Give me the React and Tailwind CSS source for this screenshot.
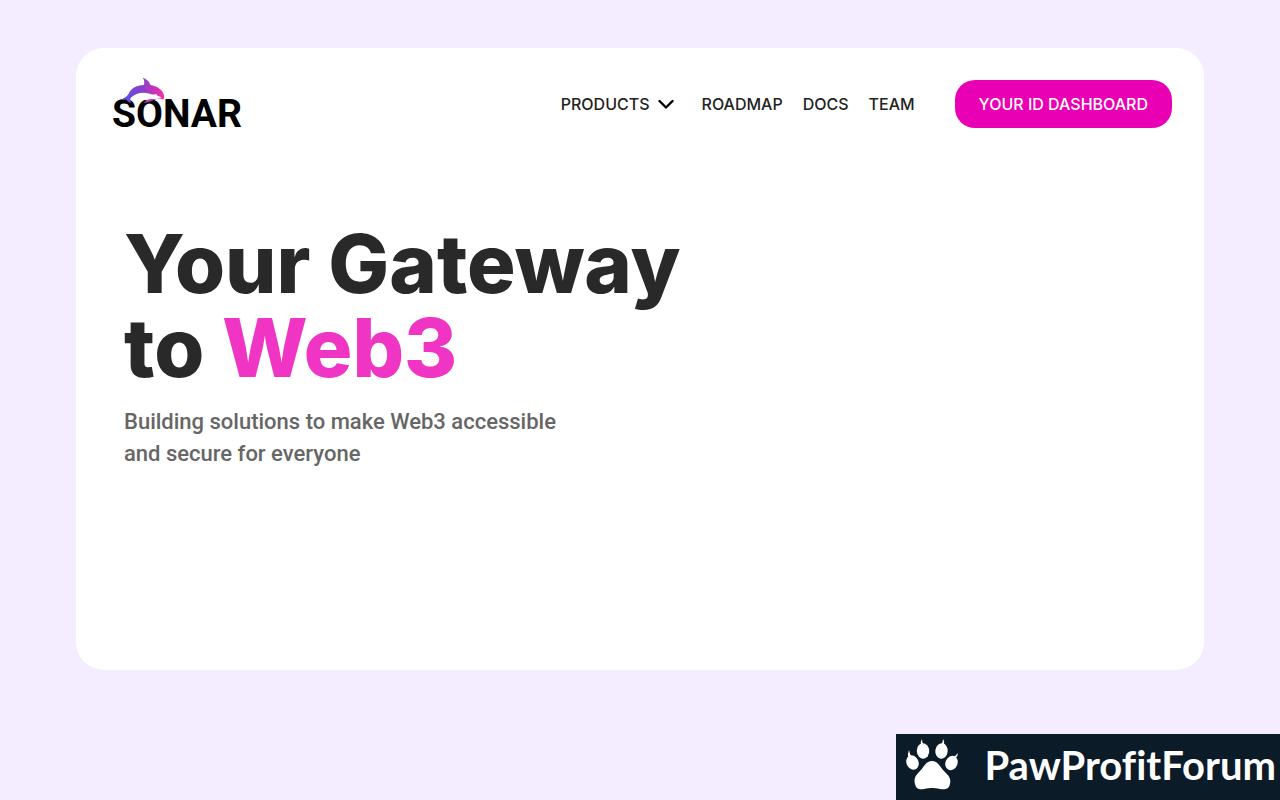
import React from 'react';

const links = ['Roadmap', 'Docs', 'Team'];

const Dolphin = () => (
  <svg className="absolute left-2.5 -top-5 h-7 w-11" viewBox="0 0 44 28" aria-hidden="true">
    <defs>
      <linearGradient id="dolphin" x1="0" y1="0" x2="1" y2="0">
        <stop offset="0" stopColor="#5a50e6" />
        <stop offset="0.5" stopColor="#8a3fca" />
        <stop offset="1" stopColor="#fb2ca6" />
      </linearGradient>
    </defs>
    <path d="M8 21C14 17 20 18 26 19L38 18L40 23L32 23C28 26 18 23 8 23Z" fill="#fff" />
    <path
      d="M6.500 18C9 12 14 9.500 22 9C22.500 6 22.500 4 20.500 1.500C25 3 27.500 6 28.500 9C35 10 40 13.500 41.500 18C42.500 20.500 42.500 22.500 41 23.500C39 22.500 36 22.500 34 22C38 22 40 21.500 39 21C37 20.500 35 19.500 34 18C31 19 29 18.500 27 17.500C20 15.500 14 17 9 21.500C7.500 23 8.500 25 9.500 27C7 26.500 5 25 4 23.500C2.500 24 1 24 0 23.500C1.500 21.500 4 22 6.500 18Z"
      fill="url(#dolphin)"
    />
    <path d="M22 27C24 23.500 27 22.500 31 23L35 23C31 24.500 27 26 22 27Z" fill="#c436bd" />
  </svg>
);

const Paw = () => (
  <svg className="h-[52px] w-[52px] shrink-0" viewBox="0 0 52 52" fill="#fff" aria-hidden="true">
    <ellipse cx="6.500" cy="23.500" rx="6" ry="7.500" transform="rotate(-24 6.500 23.500)" />
    <ellipse cx="17" cy="12" rx="6.200" ry="7.700" transform="rotate(-4 17 12)" />
    <ellipse cx="35.500" cy="12" rx="6.200" ry="7.700" transform="rotate(7 35.500 12)" />
    <ellipse cx="45.500" cy="24" rx="6" ry="7.500" transform="rotate(24 45.500 24)" />
    <path d="M2 18Q1.500 15 3 11Q3.500 14 5 17ZM15 6Q14 3 16 0Q16 3 17.500 6ZM35 6Q37 3 37 0Q39 3 37.500 7ZM46 18Q50 17 52 14Q52 17 49 20Z" />
    <path d="M26 22C20 22 18 28 14 32C10 36 7.500 39 9 45C10 50 14 51 18 50C23 48.500 29 48.500 34 50C39 51 43 50 44 45C45.500 39 42 36 38 32C34 28 32 22 26 22Z" />
  </svg>
);

const App = () => {
  return (
    <div className="min-h-screen bg-[#f4edff] px-[76px] py-12 font-['Inter',sans-serif]">
      <div className="min-h-[622px] rounded-[28px] bg-white">
        <header className="flex items-start justify-between pt-8 pr-8 pl-9">
          <a href="#" className="relative mt-4 block font-['Roboto',sans-serif] text-[39px] leading-9 font-bold text-black">
            SONAR
            <Dolphin />
          </a>
          <div className="flex items-center gap-10">
            <nav className="flex items-center gap-5 text-base font-medium text-[#222] uppercase">
              <button type="button" className="mr-2 flex items-center gap-2 uppercase">
                Products
                <svg className="h-4 w-4" viewBox="0 0 16 16" fill="none" stroke="#000" strokeWidth="2.400" strokeLinecap="round" strokeLinejoin="round" aria-hidden="true">
                  <path d="M1.500 5l6.500 6.500L14.500 5" />
                </svg>
              </button>
              {links.map((link) => (
                <a key={link} href="#">{link}</a>
              ))}
            </nav>
            <button
              type="button"
              className="h-12 rounded-[20px] bg-[#ea00b4] px-6 text-base font-medium text-white uppercase"
            >
              Your ID Dashboard
            </button>
          </div>
        </header>

        <main className="px-12 pt-[90px]">
          <h1 className="text-[81px] leading-[84px] font-extrabold text-[#292929]">
            Your Gateway
            <br />
            to <span className="text-[#f034c4]">Web3</span>
          </h1>
          <p className="mt-4 font-['Roboto',sans-serif] text-[22px] leading-8 font-medium text-[#666]">
            Building solutions to make Web3 accessible
            <br />
            and secure for everyone
          </p>
        </main>
      </div>

      <a
        href="#"
        className="fixed right-0 bottom-0 flex h-[66px] items-center gap-[26px] bg-[#0b1b28] pr-1 pb-1 pl-2.5 font-['Lato',sans-serif] text-[40px] leading-none font-bold text-white [font-variant-ligatures:none]"
      >
        <Paw />
        PawProfitForum
      </a>
    </div>
  );
};

export default App;
